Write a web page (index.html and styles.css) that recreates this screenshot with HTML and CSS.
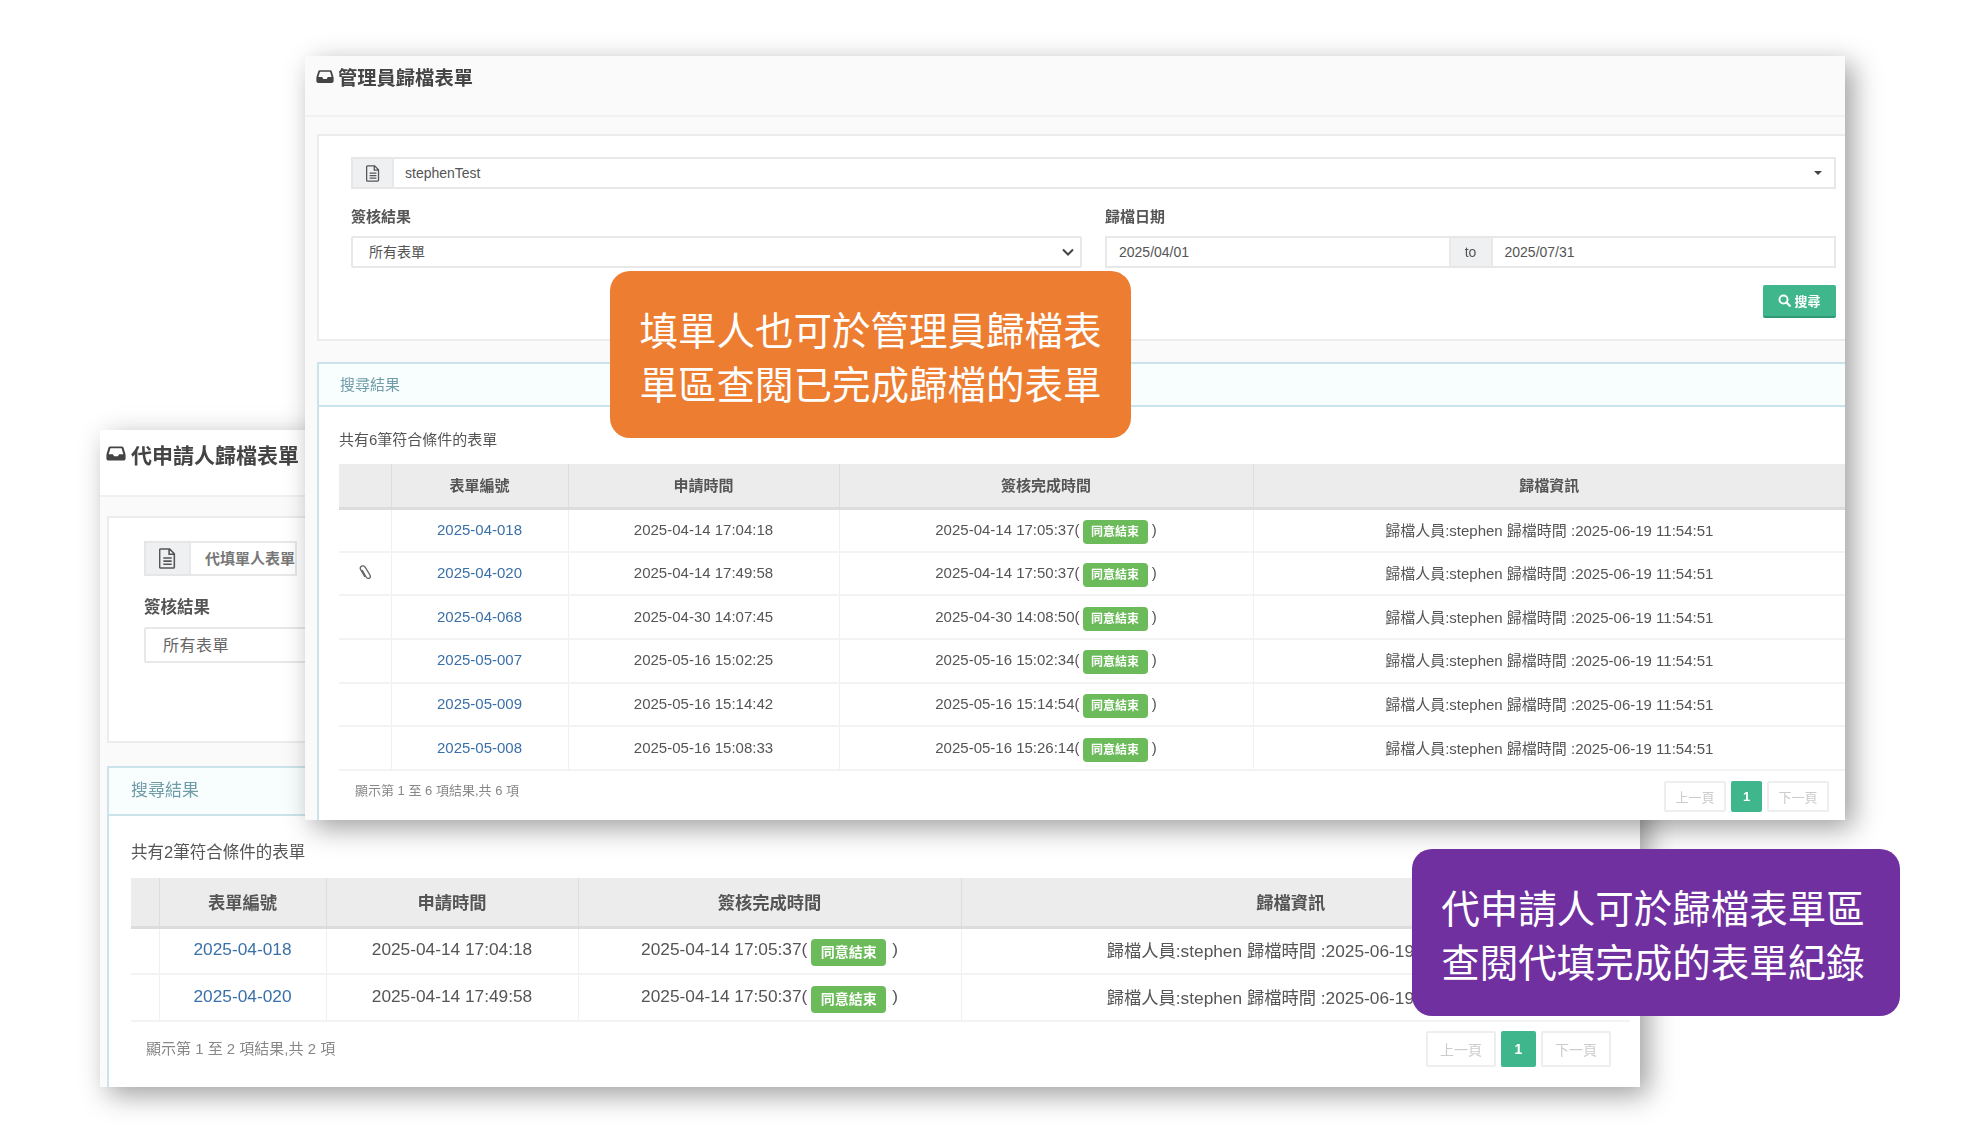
FILE: index.html
```html
<!DOCTYPE html>
<html lang="zh-Hant">
<head>
    <meta charset="UTF-8">
    <title>歸檔表單</title>
    <link rel="stylesheet" href="styles.css">
</head>
<body>
    <svg class="defs" width="0" height="0">
        <symbol id="i-inbox" viewBox="0 0 24 20">
            <path d="M5 1.500h14c1 0 1.600.5 2 1.400l2.200 7.400c.3.8.3 1.200.3 2V16c0 1.500-1 2.500-2.500 2.500h-18C1.500 18.500.5 17.500.5 16v-3.700c0-.8 0-1.200.3-2L3 2.900C3.400 2 4 1.500 5 1.500zM5.300 3.700 3.200 10.800h5.100l1.400 2.600h4.600l1.400-2.600h5.100l-2.100-7.100z" fill="currentColor" fill-rule="evenodd"/>
        </symbol>
        <symbol id="i-file" viewBox="0 0 16 20">
            <path d="M1.500 1h8.500l4.500 4.500V18a1 1 0 0 1-1 1h-12a1 1 0 0 1-1-1V2a1 1 0 0 1 1-1zM9.500 1.500V6h4.500M4 9.500h8M4 12.500h8M4 15.500h8" fill="none" stroke="currentColor" stroke-width="1.500"/>
        </symbol>
        <symbol id="i-clip" viewBox="0 0 16 20">
            <path d="M4 6.500l5 8.500c1 1.700 2.700 2.200 4 1.400s1.600-2.500.6-4.200L8 3C6.800 1 4.800.6 3.300 1.500S1.200 4.200 2.400 6.200l5.200 8.800" fill="none" stroke="currentColor" stroke-width="1.700" transform="translate(1 0)"/>
        </symbol>
        <symbol id="i-search" viewBox="0 0 16 16">
            <circle cx="6.800" cy="6.800" r="5" fill="none" stroke="currentColor" stroke-width="2.400"/>
            <path d="M10.500 10.500l4 4" stroke="currentColor" stroke-width="2.800" stroke-linecap="round"/>
        </symbol>
    </svg>

    <div class="stage">

        <!-- 後面那張:代申請人 -->
        <section class="window window-back">
            <div class="win-head">
                <svg class="icon-inbox"><use href="#i-inbox"/></svg>
                <h2>代申請人歸檔表單</h2>
            </div>
            <div class="win-body">
                <div class="panel panel-search">
                    <div class="input-group">
                        <span class="addon addon-file"><svg class="icon-file"><use href="#i-file"/></svg></span>
                        <div class="field">代填單人表單</div>
                    </div>
                    <div class="filter-row">
                        <div>
                            <label>簽核結果</label>
                            <div class="field field-solo">所有表單</div>
                        </div>
                    </div>
                </div>
                <div class="panel panel-result">
                    <div class="panel-title">搜尋結果</div>
                    <div class="panel-body">
                        <p class="count">共有2筆符合條件的表單</p>
                        <table class="result-table">
                            <colgroup>
                                <col class="col-clip"><col class="col-no"><col class="col-apply"><col class="col-done"><col class="col-info">
                            </colgroup>
                            <thead>
                                <tr><th></th><th>表單編號</th><th>申請時間</th><th>簽核完成時間</th><th>歸檔資訊</th></tr>
                            </thead>
                            <tbody>
                                <tr>
                                    <td></td>
                                    <td><a href="#">2025-04-018</a></td>
                                    <td>2025-04-14 17:04:18</td>
                                    <td>2025-04-14 17:05:37(<span class="badge">同意結束</span> )</td>
                                    <td>歸檔人員:stephen 歸檔時間 :2025-06-19 11:54:51</td>
                                </tr>
                                <tr>
                                    <td></td>
                                    <td><a href="#">2025-04-020</a></td>
                                    <td>2025-04-14 17:49:58</td>
                                    <td>2025-04-14 17:50:37(<span class="badge">同意結束</span> )</td>
                                    <td>歸檔人員:stephen 歸檔時間 :2025-06-19 11:54:51</td>
                                </tr>
                            </tbody>
                        </table>
                        <div class="table-foot">
                            <span class="table-info">顯示第 1 至 2 項結果,共 2 項</span>
                            <div class="pager">
                                <a class="page-btn">上一頁</a>
                                <a class="page-btn page-on">1</a>
                                <a class="page-btn">下一頁</a>
                            </div>
                        </div>
                    </div>
                </div>
            </div>
        </section>

        <!-- 前面那張:管理員 -->
        <section class="window window-front">
            <div class="win-head">
                <svg class="icon-inbox"><use href="#i-inbox"/></svg>
                <h2>管理員歸檔表單</h2>
            </div>
            <div class="win-body">
                <div class="panel panel-search">
                    <div class="input-group">
                        <span class="addon addon-file"><svg class="icon-file"><use href="#i-file"/></svg></span>
                        <div class="field field-grow">stephenTest<span class="caret"></span></div>
                    </div>
                    <div class="filter-row">
                        <div>
                            <label>簽核結果</label>
                            <div class="field field-solo">所有表單
                                <svg class="chevron" viewBox="0 0 12 8"><path d="M1 1.500l5 5 5-5" fill="none" stroke="currentColor" stroke-width="2"/></svg>
                            </div>
                        </div>
                        <div>
                            <label>歸檔日期</label>
                            <div class="input-group">
                                <div class="field field-grow field-date">2025/04/01</div>
                                <span class="addon addon-to">to</span>
                                <div class="field field-grow field-date">2025/07/31</div>
                            </div>
                        </div>
                    </div>
                    <div class="search-row">
                        <button class="btn-search"><svg class="icon-search"><use href="#i-search"/></svg>搜尋</button>
                    </div>
                </div>
                <div class="panel panel-result">
                    <div class="panel-title">搜尋結果</div>
                    <div class="panel-body">
                        <p class="count">共有6筆符合條件的表單</p>
                        <table class="result-table">
                            <colgroup>
                                <col class="col-clip"><col class="col-no"><col class="col-apply"><col class="col-done"><col class="col-info">
                            </colgroup>
                            <thead>
                                <tr><th></th><th>表單編號</th><th>申請時間</th><th>簽核完成時間</th><th>歸檔資訊</th></tr>
                            </thead>
                            <tbody>
                                <tr>
                                    <td></td>
                                    <td><a href="#">2025-04-018</a></td>
                                    <td>2025-04-14 17:04:18</td>
                                    <td>2025-04-14 17:05:37(<span class="badge">同意結束</span> )</td>
                                    <td>歸檔人員:stephen 歸檔時間 :2025-06-19 11:54:51</td>
                                </tr>
                                <tr>
                                    <td><svg class="icon-clip"><use href="#i-clip"/></svg></td>
                                    <td><a href="#">2025-04-020</a></td>
                                    <td>2025-04-14 17:49:58</td>
                                    <td>2025-04-14 17:50:37(<span class="badge">同意結束</span> )</td>
                                    <td>歸檔人員:stephen 歸檔時間 :2025-06-19 11:54:51</td>
                                </tr>
                                <tr>
                                    <td></td>
                                    <td><a href="#">2025-04-068</a></td>
                                    <td>2025-04-30 14:07:45</td>
                                    <td>2025-04-30 14:08:50(<span class="badge">同意結束</span> )</td>
                                    <td>歸檔人員:stephen 歸檔時間 :2025-06-19 11:54:51</td>
                                </tr>
                                <tr>
                                    <td></td>
                                    <td><a href="#">2025-05-007</a></td>
                                    <td>2025-05-16 15:02:25</td>
                                    <td>2025-05-16 15:02:34(<span class="badge">同意結束</span> )</td>
                                    <td>歸檔人員:stephen 歸檔時間 :2025-06-19 11:54:51</td>
                                </tr>
                                <tr>
                                    <td></td>
                                    <td><a href="#">2025-05-009</a></td>
                                    <td>2025-05-16 15:14:42</td>
                                    <td>2025-05-16 15:14:54(<span class="badge">同意結束</span> )</td>
                                    <td>歸檔人員:stephen 歸檔時間 :2025-06-19 11:54:51</td>
                                </tr>
                                <tr>
                                    <td></td>
                                    <td><a href="#">2025-05-008</a></td>
                                    <td>2025-05-16 15:08:33</td>
                                    <td>2025-05-16 15:26:14(<span class="badge">同意結束</span> )</td>
                                    <td>歸檔人員:stephen 歸檔時間 :2025-06-19 11:54:51</td>
                                </tr>
                            </tbody>
                        </table>
                        <div class="table-foot">
                            <span class="table-info">顯示第 1 至 6 項結果,共 6 項</span>
                            <div class="pager">
                                <a class="page-btn">上一頁</a>
                                <a class="page-btn page-on">1</a>
                                <a class="page-btn">下一頁</a>
                            </div>
                        </div>
                    </div>
                </div>
            </div>
        </section>

        <div class="callout callout-orange">填單人也可於管理員歸檔表<br>單區查閱已完成歸檔的表單</div>
        <div class="callout callout-purple">代申請人可於歸檔表單區<br>查閱代填完成的表單紀錄</div>
    </div>
</body>
</html>
```

FILE: styles.css
```css
* {
    box-sizing: border-box;
}
html, body {
    margin: 0;
    padding: 0;
    background-color: #fff;
}
body {
    font-family: "Liberation Sans", "Noto Sans CJK TC", sans-serif;
    color: #555;
    overflow: hidden;
}
.defs {
    position: absolute;
}
.stage {
    position: relative;
    width: 1962px;
    height: 1146px;
    overflow: hidden;
}

/* windows */
.window {
    position: absolute;
    display: flex;
    flex-direction: column;
    overflow: hidden;
    background-color: #fafafa;
    box-shadow: 8px 8px 26px rgba(0, 0, 0, 0.38);
    filter: blur(0.3px);
}
.window-front {
    left: 305px;
    top: 56px;
    width: 1540px;
    height: 764px;
    font-size: 14px;
}
.window-back {
    left: 100px;
    top: 430px;
    width: 1540px;
    height: 657px;
    font-size: 16px;
}
.win-head {
    display: flex;
    align-items: center;
    flex: none;
    background-color: #fafafa;
    border-bottom: 2px solid #f1f1f1;
}
.win-head h2 {
    margin: 0;
    font-weight: bold;
    color: #444;
}
.window-front .win-head {
    height: 61px;
    padding: 0 0 18px 11px;
}
.window-front .win-head h2 {
    font-size: 19.300px;
}
.window-front .icon-inbox {
    width: 18px;
    height: 15px;
    margin-right: 4px;
    color: #444;
}
.window-back .win-head {
    height: 67px;
    padding: 0 0 18px 6px;
    background-color: #fff;
}
.window-back .win-head h2 {
    font-size: 21px;
}
.window-back .icon-inbox {
    width: 20px;
    height: 17px;
    margin-right: 5px;
    color: #444;
}
.win-body {
    display: flex;
    flex-direction: column;
    flex: 1;
    min-height: 0;
}
.window-front .win-body {
    padding: 17px 0 0 12px;
}
.window-back .win-body {
    padding: 19px 0 0 7px;
}

/* search panel */
.panel {
    background-color: #fff;
    border: 2px solid #ececec;
    border-right: none;
}
.window-front .panel-search {
    flex: none;
    height: 207px;
    padding: 21px 9px 0 32px;
}
.window-back .panel-search {
    flex: none;
    height: 227px;
    padding: 23px 8px 0 35px;
}
.input-group {
    display: flex;
}
.addon {
    display: flex;
    align-items: center;
    justify-content: center;
    flex: none;
    background-color: #eef0f1;
    color: #555;
    border: 2px solid #e6e6e6;
}
.addon-file {
    width: 41px;
    border-right: none;
}
.window-back .addon-file {
    width: 45px;
}
.addon-to {
    width: 40px;
    border-left: none;
    border-right: none;
}
.icon-file {
    width: 14px;
    height: 17px;
}
.window-back .icon-file {
    width: 17px;
    height: 21px;
}
.field {
    position: relative;
    display: flex;
    align-items: center;
    height: 32px;
    padding-left: 11px;
    background-color: #fff;
    border: 2px solid #e8e8e8;
    color: #555;
}
.field-grow {
    flex: 1;
}
.field-date {
    padding-left: 12px;
    font-size: 14px;
}
.window-back .field {
    height: 35px;
    padding: 0 0 2px 14px;
    font-weight: bold;
    font-size: 15px;
    color: #777;
}
.window-back .field-solo {
    height: 36px;
    padding: 0 0 2px 17px;
    font-size: 16px;
    font-weight: normal;
    color: #666;
    letter-spacing: 0.500px;
}
.field-solo {
    padding: 0 0 2px 16px;
    border-radius: 2px;
}
.caret {
    position: absolute;
    right: 12px;
    top: 12px;
    border-top: 4px solid #444;
    border-left: 4px solid transparent;
    border-right: 4px solid transparent;
}
.chevron {
    position: absolute;
    right: 6px;
    top: 10px;
    width: 12px;
    height: 8px;
    color: #444;
}
.filter-row {
    display: grid;
    grid-template-columns: 731px 731px;
    column-gap: 23px;
    margin-top: 18px;
}
.window-back .filter-row {
    margin-top: 20px;
}
.filter-row label {
    display: block;
    height: 20px;
    margin-bottom: 9px;
    font-size: 15px;
    line-height: 20px;
    font-weight: bold;
    color: #555;
}
.window-back .filter-row label {
    height: 22px;
    margin-bottom: 9px;
    font-size: 16.500px;
    line-height: 22px;
}
.search-row {
    display: flex;
    justify-content: flex-end;
    margin-top: 17px;
}
.btn-search {
    display: flex;
    align-items: center;
    justify-content: center;
    width: 73px;
    height: 33px;
    padding: 0;
    background-color: #3fb68c;
    color: #fff;
    border: none;
    border-bottom: 2px solid #2f9a75;
    border-radius: 2px;
    font-family: inherit;
    font-size: 13px;
    font-weight: bold;
}
.icon-search {
    width: 13px;
    height: 13px;
    margin-right: 3px;
}

/* result panel */
.panel-result {
    flex: 1;
    min-height: 0;
    border-color: #cbe3ea;
    border-bottom: none;
}
.window-front .panel-result {
    margin-top: 21px;
}
.window-back .panel-result {
    margin-top: 23px;
}
.panel-title {
    background-color: #f8fefe;
    border-bottom: 2px solid #cbe3ea;
    color: #6f9ca8;
}
.window-front .panel-title {
    height: 43px;
    padding-left: 21px;
    font-size: 15px;
    line-height: 41px;
}
.window-back .panel-title {
    height: 48px;
    padding-left: 22px;
    font-size: 17px;
    line-height: 46px;
}
.window-front .panel-body {
    padding-left: 20px;
}
.window-back .panel-body {
    padding-left: 22px;
}
.count {
    margin: 0;
    color: #555;
}
.window-front .count {
    padding-top: 23px;
    height: 57px;
    font-size: 15px;
    line-height: 20px;
}
.window-back .count {
    padding-top: 25px;
    height: 62px;
    font-size: 16.500px;
    line-height: 22px;
}

/* table */
.result-table {
    border-collapse: collapse;
    table-layout: fixed;
}
.window-front .result-table {
    width: 1506px;
    font-size: 15px;
}
.window-back .result-table {
    width: 1499px;
    font-size: 17.300px;
}
.window-front .col-clip { width: 52px; }
.window-front .col-no { width: 177px; }
.window-front .col-apply { width: 271px; }
.window-front .col-done { width: 414px; }
.window-front .col-info { width: 592px; }
.window-back .col-clip { width: 28px; }
.window-back .col-no { width: 167px; }
.window-back .col-apply { width: 252px; }
.window-back .col-done { width: 383px; }
.window-back .col-info { width: 669px; }
.result-table th {
    background-color: #ececec;
    border-right: 1px solid #dddddd;
    border-bottom: 3px solid #dcdcdc;
    color: #555;
    font-weight: bold;
    text-align: center;
    padding: 0;
}
.window-front th {
    padding-bottom: 2px;
}
.result-table th:last-child,
.result-table td:last-child {
    border-right: none;
}
.window-back th:last-child {
    padding-right: 10px;
}
.result-table td {
    border-right: 1px solid #f0f0f0;
    border-bottom: 2px solid #f3f3f3;
    text-align: center;
    white-space: nowrap;
    padding: 0 0 2px;
    color: #555;
}
.window-front thead tr { height: 44px; }
.window-front tbody tr { height: 43.700px; }
.window-back thead tr { height: 49px; }
.window-back tbody tr { height: 47px; }
.result-table a {
    color: #3a70a8;
    text-decoration: none;
}
/* 負 margin:徽章不撐高行高,日期才會跟其他欄對齊 */
.badge {
    display: inline-block;
    width: 65px;
    height: 24px;
    margin: -6px 0 -6px 3px;
    background-color: #6cbb5a;
    color: #fff;
    border-radius: 4px;
    font-size: 12px;
    font-weight: bold;
    line-height: 24px;
    vertical-align: -1px;
    text-align: center;
}
.window-back .badge {
    height: 27px;
    width: 75px;
    margin: -7px 1px -7px 4px;
    font-size: 14px;
    line-height: 27px;
    vertical-align: -2px;
}
.icon-clip {
    display: block;
    width: 13px;
    height: 16px;
    margin: 0 auto;
    color: #666;
}

/* footer of table */
.table-foot {
    display: flex;
    justify-content: space-between;
}
.window-front .table-foot {
    padding: 10px 16px 0 16px;
}
.window-back .table-foot {
    padding: 9px 19px 0 15px;
    width: 1499px;
}
.table-info {
    color: #888;
    font-size: 13px;
    line-height: 18px;
    padding-top: 1px;
}
.window-back .table-info {
    font-size: 15px;
    padding-top: 9px;
}
.pager {
    display: flex;
    gap: 5px;
}
.page-btn {
    display: flex;
    align-items: center;
    justify-content: center;
    width: 62px;
    height: 31px;
    background-color: #fff;
    border: 2px solid #eeeeee;
    border-radius: 2px;
    color: #cccccc;
    font-size: 13px;
}
.page-on {
    width: 31px;
    background-color: #3fb68c;
    border-color: #3fb68c;
    color: #fff;
    font-weight: bold;
}
.window-back .page-btn {
    width: 70px;
    height: 36px;
    font-size: 14px;
}
.window-back .page-on {
    width: 35px;
}

/* callouts */
.callout {
    position: absolute;
    display: flex;
    align-items: center;
    justify-content: center;
    text-align: center;
    color: #fff;
    font-family: "Noto Sans CJK TC", sans-serif;
    font-size: 38.500px;
    line-height: 54px;
    border-radius: 20px;
}
.callout-orange {
    left: 610px;
    top: 271px;
    width: 521px;
    height: 167px;
    background-color: #ed7d31;
}
.callout-purple {
    left: 1412px;
    top: 849px;
    width: 488px;
    height: 167px;
    padding-right: 6px;
    background-color: #7030a0;
}
```
